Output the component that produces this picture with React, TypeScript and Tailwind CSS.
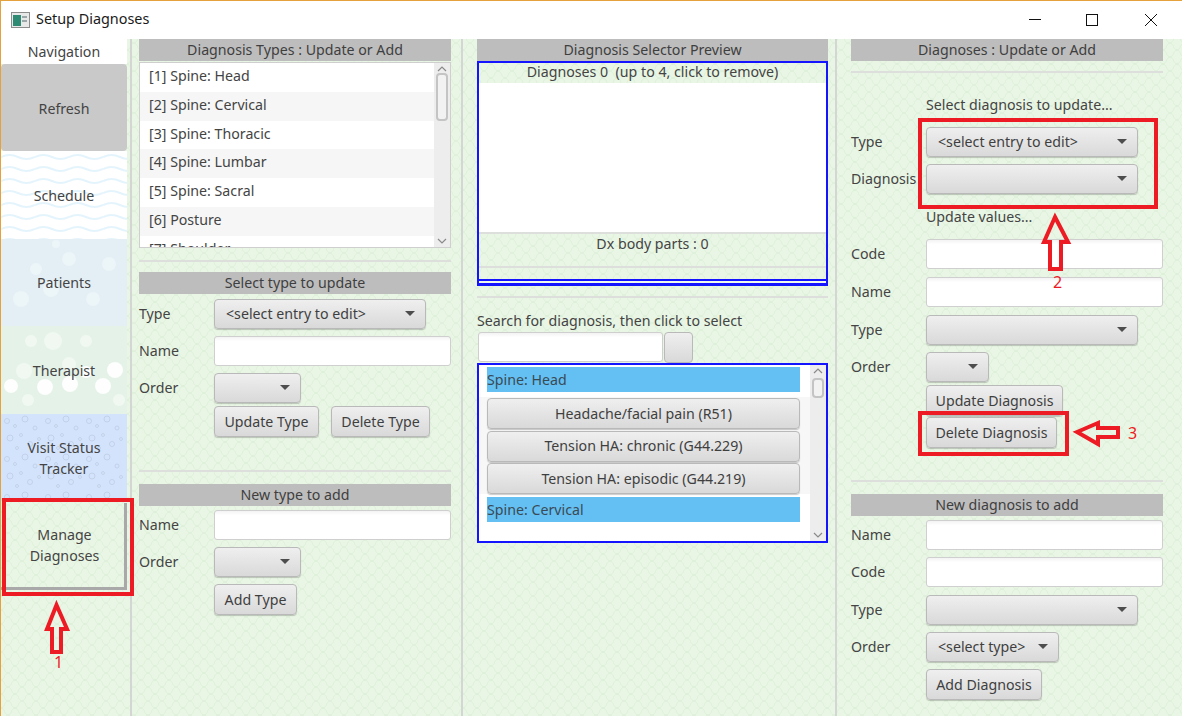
import { ReactNode } from "react"

const items = ["[1] Spine: Head", "[2] Spine: Cervical", "[3] Spine: Thoracic", "[4] Spine: Lumbar", "[5] Spine: Sacral", "[6] Posture", "[7] Shoulder"]

function Caret() {
  return (
    <svg width="10" height="6" viewBox="0 0 10 6" className="shrink-0">
      <polygon points="0,0 10,0 5,5" fill="#4d4d4d" />
    </svg>
  )
}

function Select({ width, text }: { width: string; text?: string }) {
  return (
    <div className={`${width} h-[30px] flex items-center justify-between pl-[11px] pr-[10px] rounded-[4px] border border-[#b9b9b9] bg-gradient-to-b from-[#efefef] to-[#d9d9d9] shadow-[0_1px_1px_rgba(0,0,0,0.2)] text-[#3f3f3f]`}>
      <span>{text}</span>
      <Caret />
    </div>
  )
}

function Input() {
  return <div className="h-[30px] flex-1 rounded-[3px] border border-[#cfcfcf] bg-gradient-to-b from-[#f3f3f3] to-white to-[15%]" />
}

function Button({ width, children }: { width: string; children?: ReactNode }) {
  return (
    <div className={`${width} h-[31px] flex items-center justify-center rounded-[4px] border border-[#b9b9b9] bg-gradient-to-b from-[#efefef] to-[#d9d9d9] shadow-[0_1px_1px_rgba(0,0,0,0.2)] text-[#3f3f3f]`}>
      {children}
    </div>
  )
}

function Row({ label, className, children }: { label: string; className?: string; children: ReactNode }) {
  return (
    <div className={`flex items-center ${className ?? ""}`}>
      <div className="w-[75px] shrink-0 text-[#444]">{label}</div>
      {children}
    </div>
  )
}

function Header({ children, className }: { children: ReactNode; className?: string }) {
  return <div className={`h-[22px] bg-[#bdbdbd] text-center leading-[21px] text-[#3f3f3f] ${className ?? ""}`}>{children}</div>
}

function Sep({ className }: { className?: string }) {
  return <div className={`h-[2px] bg-[#dcdfdb] ${className ?? ""}`} />
}

function Divider() {
  return <div className="w-[2px] shrink-0 bg-[#d3d6d3]" />
}

function ScrollArrow({ up }: { up?: boolean }) {
  return (
    <svg width="10" height="6" viewBox="0 0 10 6">
      <polyline points={up ? "1,5 5,1 9,5" : "1,1 5,5 9,1"} fill="none" stroke="#8a8a8a" strokeWidth="1.2" />
    </svg>
  )
}

function NavItem({ bg, children, className }: { bg?: ReactNode; children: ReactNode; className?: string }) {
  return (
    <div className={`relative h-[87px] flex items-center justify-center text-center leading-[21px] text-[#444] overflow-hidden ${className ?? ""}`}>
      {bg}
      <span className="relative">{children}</span>
    </div>
  )
}

const spots = [[52, 15, 9], [68, 38, 7], [23, 45, 8], [85, 46, 6], [114, 44, 8], [10, 60, 7], [44, 61, 8], [69, 58, 8], [102, 60, 8], [27, 74, 6], [118, 74, 6], [30, 15, 6], [85, 15, 6]]
const blurSpots = [[55, 5, 4], [68, 20, 7], [108, 25, 7], [50, 50, 8], [92, 60, 7], [20, 60, 8], [35, 30, 6]]

export default function App() {
  return (
    <div className="relative w-[1182px] h-[716px] overflow-hidden bg-[#eaf6e5] border-t border-l border-[#e5a23c] text-[14.2px] font-['Noto_Sans',sans-serif] flex flex-col">
      <svg className="absolute inset-0 w-full h-full">
        <defs>
          <pattern id="lattice" width="14" height="14" patternUnits="userSpaceOnUse">
            <path d="M0 7 Q3.5 6 3.5 3.5 Q3.5 1 7 0 Q10.5 1 10.5 3.5 Q10.5 6 14 7 Q10.5 8 10.5 10.5 Q10.5 13 7 14 Q3.5 13 3.5 10.5 Q3.5 8 0 7 Z" fill="none" stroke="#dcefd8" strokeWidth="1" />
          </pattern>
        </defs>
        <rect width="100%" height="100%" fill="url(#lattice)" />
      </svg>

      <div className="relative h-[38px] shrink-0 bg-white flex items-center pl-[10px] text-[14.4px] text-[#1a1a1a]">
        <svg width="19" height="16" viewBox="0 0 19 16" className="mr-[6px]">
          <rect x="0.5" y="0.5" width="18" height="15" fill="#e8e8e8" stroke="#8c8c8c" />
          <rect x="2" y="3" width="8" height="11" fill="#2e8a72" />
          <rect x="11" y="4" width="5" height="2" fill="#9aa6a8" />
          <rect x="11" y="8" width="5" height="2" fill="#9aa6a8" />
        </svg>
        <span className="-mt-[2px]">Setup Diagnoses</span>
        <svg width="130" height="14" viewBox="0 0 130 14" className="ml-auto mr-[24px] -mt-[1px]">
          <line x1="1" y1="6.5" x2="13" y2="6.5" stroke="#111" />
          <rect x="58.5" y="1.5" width="11" height="11" fill="none" stroke="#111" />
          <path d="M117 1 L129 13 M129 1 L117 13" stroke="#111" fill="none" />
        </svg>
      </div>

      <div className="relative flex flex-1 min-h-0">
        {/* navigation */}
        <div className="w-[126px] shrink-0 flex flex-col">
          <div className="h-[25px] bg-white text-center leading-[26px] text-[#444]">Navigation</div>
          <NavItem className="bg-[#c9c9c9] rounded-[4px]">
            <span className="relative top-px">Refresh</span>
          </NavItem>
          <NavItem
            className="bg-white h-[88px]"
            bg={
              <svg className="absolute inset-0 w-full h-full">
                <defs>
                  <pattern id="waves" width="34" height="12" patternUnits="userSpaceOnUse">
                    <path d="M0 6 Q8.5 2 17 6 T34 6" fill="none" stroke="#e4f4fc" strokeWidth="2" />
                  </pattern>
                </defs>
                <rect width="100%" height="100%" fill="url(#waves)" />
              </svg>
            }
          >
            Schedule
          </NavItem>
          <NavItem
            className="bg-[#e4eff5]"
            bg={
              <svg className="absolute inset-0 w-full h-full">
                {blurSpots.map(([x, y, r], i) => (
                  <circle key={i} cx={x} cy={y} r={r} fill="#edf6f9" opacity="0.8" />
                ))}
              </svg>
            }
          >
            Patients
          </NavItem>
          <NavItem
            className="bg-[#e5f2e8] h-[88px]"
            bg={
              <svg className="absolute inset-0 w-full h-full">
                {spots.map(([x, y, r], i) => (
                  <circle key={i} cx={x} cy={y} r={r} fill="#ffffff" opacity={i < 9 && i > 2 ? 0.9 : 0.45} />
                ))}
              </svg>
            }
          >
            Therapist
          </NavItem>
          <NavItem
            className="bg-[#d3e3fb]"
            bg={
              <svg className="absolute inset-0 w-full h-full">
                <defs>
                  <pattern id="drops" width="41" height="38" patternUnits="userSpaceOnUse">
                    <g fill="none" stroke="#c2d1e8" strokeWidth="1">
                      <circle cx="6" cy="7" r="2.5" />
                      <circle cx="14" cy="12" r="1.5" />
                      <circle cx="24" cy="5" r="3" />
                      <circle cx="34" cy="14" r="2" />
                      <circle cx="9" cy="24" r="3" />
                      <circle cx="20" cy="21" r="1.5" />
                      <circle cx="29" cy="30" r="2.5" />
                      <circle cx="38" cy="25" r="1.5" />
                      <circle cx="16" cy="34" r="1.5" />
                    </g>
                  </pattern>
                </defs>
                <rect width="100%" height="100%" fill="url(#drops)" />
              </svg>
            }
          >
            Visit Status
            <br />
            Tracker
          </NavItem>
          <div className="mt-[2px] h-[87px] flex items-center justify-center text-center leading-[21px] text-[#444] border-r-[3px] border-b-[3px] border-[#a9a9a9] pl-[4px]">
            <span>
              Manage
              <br />
              Diagnoses
            </span>
          </div>
        </div>
        <div className="w-[3px] shrink-0" />
        <Divider />

        {/* diagnosis types */}
        <div className="relative ml-[7px] w-[312px] shrink-0">
          <Header>Diagnosis Types : Update or Add</Header>
          <div className="mt-px h-[186px] flex bg-white border border-[#cfcfcf] overflow-hidden">
            <div className="flex-1">
              {items.map((t, i) => (
                <div key={t} className={`h-[28.8px] leading-[26px] pl-[9px] text-[#444] ${i % 2 ? "bg-[#f6f6f6]" : "bg-white"}`}>
                  {t}
                </div>
              ))}
            </div>
            <div className="w-[16px] bg-[#ededed] flex flex-col items-center pt-[3px] justify-between pb-[3px]">
              <ScrollArrow up />
              <div className="w-[12px] h-[48px] -mt-[116px] rounded-[4px] border-2 border-[#c4c4c4] bg-[#f2f2f2]" />
              <ScrollArrow />
            </div>
          </div>
          <Sep className="mt-[12px]" />
          <Header className="mt-[10px]">Select type to update</Header>
          <Row label="Type" className="mt-[5px]">
            <Select width="w-[212px]" text="<select entry to edit>" />
          </Row>
          <Row label="Name" className="mt-[7px]">
            <Input />
          </Row>
          <Row label="Order" className="mt-[7px]">
            <Select width="w-[87px]" />
          </Row>
          <div className="flex ml-[75px] mt-[3px] gap-[12px]">
            <Button width="w-[105px]">Update Type</Button>
            <Button width="w-[99px]">Delete Type</Button>
          </div>
          <Sep className="mt-[33px]" />
          <Header className="mt-[12px]">New type to add</Header>
          <Row label="Name" className="mt-[4px]">
            <Input />
          </Row>
          <Row label="Order" className="mt-[7px]">
            <Select width="w-[87px]" />
          </Row>
          <div className="ml-[75px] mt-[7px]">
            <Button width="w-[83px]">Add Type</Button>
          </div>
        </div>

        <div className="w-[10px] shrink-0" />
        <Divider />

        {/* preview and search */}
        <div className="ml-[14px] w-[351px] shrink-0">
          <Header>Diagnosis Selector Preview</Header>
          <div className="h-[225px] border-2 border-[#1414ff]">
            <div className="h-[20px] text-center leading-[17px] text-[#444] whitespace-pre">Diagnoses 0  (up to 4, click to remove)</div>
            <div className="h-[149px] bg-white" />
            <Sep />
            <div className="h-[22px] text-center leading-[20px] text-[#444]">Dx body parts : 0</div>
            <Sep className="mt-[10px]" />
          </div>
          <div className="h-[6px] -mt-[7px] border-2 border-[#1414ff] bg-white/40" />
          <Sep className="mt-[11px]" />
          <div className="mt-[12px] h-[21px] leading-[21px] text-[#444]">Search for diagnosis, then click to select</div>
          <div className="flex pl-px mt-[1px]">
            <div className="flex w-[185px] h-[30px] rounded-[3px] border border-[#cfcfcf] bg-gradient-to-b from-[#f3f3f3] to-white to-[15%]" />
            <div className="ml-px w-[29px] h-[31px] rounded-[4px] border border-[#b9b9b9] bg-gradient-to-b from-[#efefef] to-[#d9d9d9]" />
          </div>
          <div className="h-[180px] flex bg-white border-2 border-[#1414ff] overflow-hidden">
            <div className="flex-1 pt-[2px]">
              <div className="ml-[8px] mr-[10px] h-[25px] bg-[#64c0f2] leading-[26px] text-[#3a4a55]">Spine: Head</div>
              <div className="mt-[5px] pt-px flex flex-col gap-[1.5px] bg-[#f7f7f7] pl-[8px] pr-[10px]">
                <Button width="w-full">Headache/facial pain (R51)</Button>
                <Button width="w-full">Tension HA: chronic (G44.229)</Button>
                <Button width="w-full">Tension HA: episodic (G44.219)</Button>
              </div>
              <div className="mt-[3px] ml-[8px] mr-[10px] h-[25px] bg-[#64c0f2] leading-[26px] text-[#3a4a55]">Spine: Cervical</div>
            </div>
            <div className="w-[16px] bg-[#ededed] flex flex-col items-center justify-between py-[3px]">
              <ScrollArrow up />
              <div className="w-[12px] h-[20px] -mt-[130px] rounded-[4px] border-2 border-[#c4c4c4] bg-[#f2f2f2]" />
              <ScrollArrow />
            </div>
          </div>
        </div>

        <div className="w-[7px] shrink-0" />
        <Divider />

        {/* diagnoses */}
        <div className="ml-[14px] w-[312px] shrink-0">
          <Header>Diagnoses : Update or Add</Header>
          <Sep className="mt-[10px]" />
          <div className="ml-[75px] mt-[21px] h-[21px] leading-[21px] text-[#444]">Select diagnosis to update...</div>
          <Row label="Type" className="mt-[12px]">
            <Select width="w-[212px]" text="<select entry to edit>" />
          </Row>
          <Row label="Diagnosis" className="mt-[7px]">
            <Select width="w-[212px]" />
          </Row>
          <div className="ml-[75px] mt-[13px] h-[21px] leading-[20px] text-[#444]">Update values...</div>
          <Row label="Code" className="mt-[11px]">
            <Input />
          </Row>
          <Row label="Name" className="mt-[8px]">
            <Input />
          </Row>
          <Row label="Type" className="mt-[8px]">
            <Select width="w-[212px]" />
          </Row>
          <Row label="Order" className="mt-[7px]">
            <Select width="w-[63px]" />
          </Row>
          <div className="ml-[75px] mt-[3px]">
            <Button width="w-[137px]">Update Diagnosis</Button>
          </div>
          <div className="ml-[75px] mt-[1px]">
            <Button width="w-[131px]">Delete Diagnosis</Button>
          </div>
          <Sep className="mt-[32px]" />
          <Header className="mt-[12px]">New diagnosis to add</Header>
          <Row label="Name" className="mt-[4px]">
            <Input />
          </Row>
          <Row label="Code" className="mt-[7px]">
            <Input />
          </Row>
          <Row label="Type" className="mt-[8px]">
            <Select width="w-[212px]" />
          </Row>
          <Row label="Order" className="mt-[7px]">
            <Select width="w-[133px]" text="<select type>" />
          </Row>
          <div className="ml-[75px] mt-[7px]">
            <Button width="w-[116px]">Add Diagnosis</Button>
          </div>
        </div>
      </div>

      {/* red annotations */}
      <div className="absolute left-[1px] top-[497px] w-[132px] h-[98px] border-[4px] border-[#ed1c24]" />
      <div className="absolute left-[917px] top-[117px] w-[240px] h-[91px] border-[4px] border-[#ed1c24]" />
      <div className="absolute left-[917px] top-[410px] w-[151px] h-[45px] border-[4px] border-[#ed1c24]" />
      <svg className="absolute left-0 top-0 w-[1182px] h-[716px] pointer-events-none" fill="none" stroke="#ed1c24" strokeWidth="4">
        <path d="M55.5 604 L66 628 L60 628 L60 651 L51 651 L51 628 L46 628 Z" />
        <path d="M1054 216 L1067 241 L1060 241 L1060 268 L1049 268 L1049 241 L1043 241 Z" />
        <path d="M1076 431 L1097 422 L1097 427 L1117 427 L1117 436 L1097 436 L1097 443 Z" />
      </svg>
      <div className="absolute left-[53px] top-[650px] text-[16px] leading-[22px] text-[#ed1c24]">1</div>
      <div className="absolute left-[1052px] top-[270px] text-[16px] leading-[22px] text-[#ed1c24]">2</div>
      <div className="absolute left-[1127px] top-[421px] text-[16px] leading-[22px] text-[#ed1c24]">3</div>
    </div>
  )
}
